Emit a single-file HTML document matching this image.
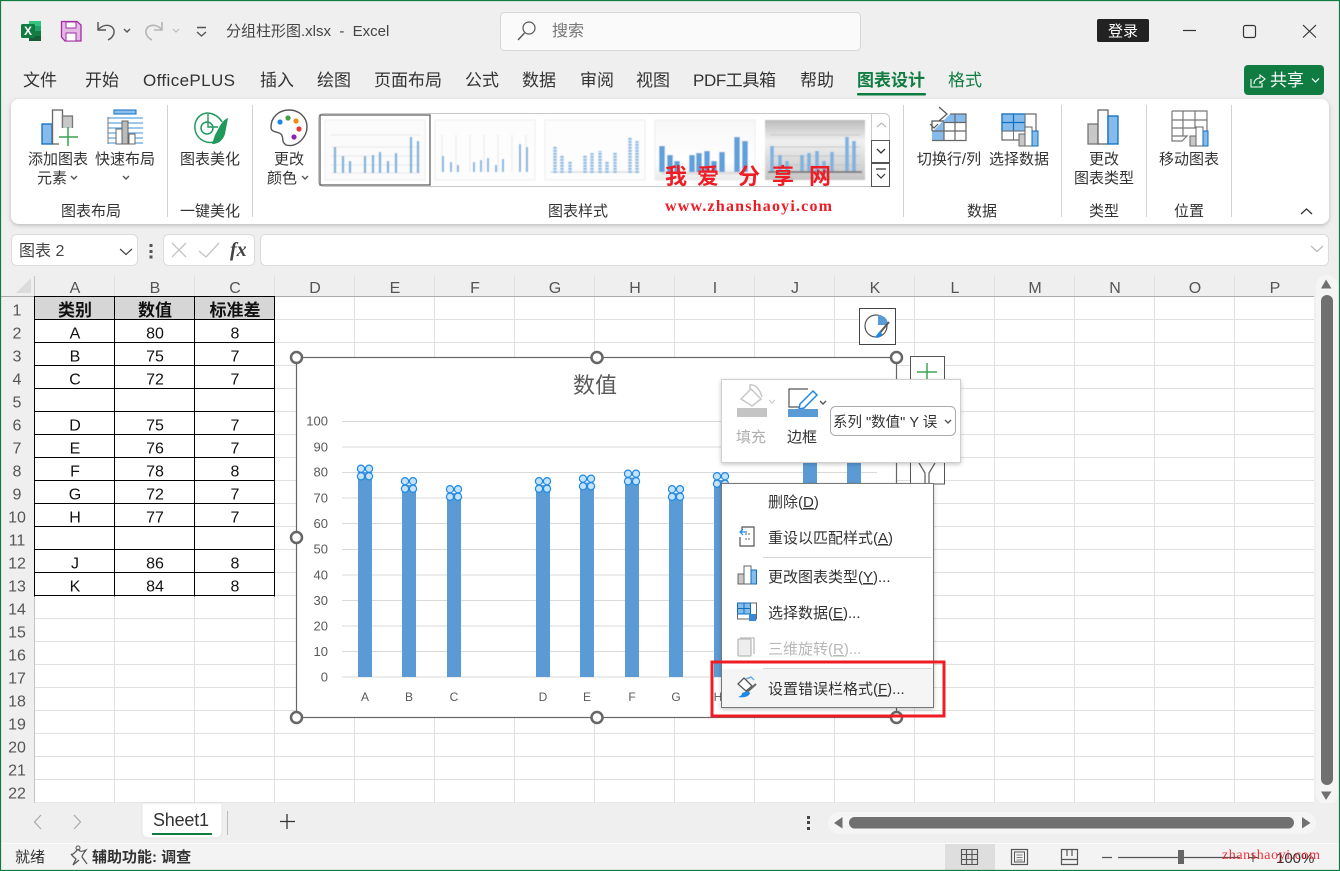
<!DOCTYPE html>
<html lang="zh"><head><meta charset="utf-8"><title>分组柱形图.xlsx - Excel</title>
<style>
html,body{margin:0;padding:0;width:1340px;height:871px;overflow:hidden;background:#efefef}
svg{display:block}
text{font-family:"Liberation Sans","Noto Sans CJK SC",sans-serif;fill:#333;font-size:15px}
.m{text-anchor:middle}.e{text-anchor:end}
.tab{font-size:17px;fill:#333}
.h{font-size:16px;fill:#555;text-anchor:middle}
.c{font-size:16px;fill:#111;text-anchor:middle}
.ax{font-size:13px;fill:#595959;text-anchor:end}
.xl{font-size:12px;fill:#595959;text-anchor:middle}
.mn{font-size:15px;fill:#333}
.i{fill:none;stroke:#555;stroke-width:1.4}
.gl{font-size:15px}
</style></head><body>
<svg width="1340" height="871" viewBox="0 0 1340 871" xmlns="http://www.w3.org/2000/svg">
<defs>
<filter id="sh" x="-5%" y="-10%" width="110%" height="125%"><feDropShadow dx="0" dy="1.5" stdDeviation="2" flood-color="#000" flood-opacity=".22"/></filter>
<filter id="bl" x="-5%" y="-5%" width="110%" height="110%"><feGaussianBlur stdDeviation=".5"/></filter>
<pattern id="grid" x="35" y="297" width="80" height="23" patternUnits="userSpaceOnUse"><rect width="80" height="23" fill="#fff"/><path d="M79.5 0V23M0 22.5H80" stroke="#e0e0e0" stroke-width="1"/></pattern>
<linearGradient id="g4" x1="0" y1="0" x2="0" y2="1"><stop offset="0" stop-color="#f7f7f7"/><stop offset=".7" stop-color="#ffffff"/><stop offset="1" stop-color="#e9e9e9"/></linearGradient>
<linearGradient id="g5" x1="0" y1="0" x2="0" y2="1"><stop offset="0" stop-color="#bbb"/><stop offset=".35" stop-color="#f0f0f0"/><stop offset="1" stop-color="#c4c4c4"/></linearGradient>
<clipPath id="ddc"><rect x="832" y="408" width="108" height="26"/></clipPath>
<g id="hd"><circle cx="-4" cy="-3.8" r="3.6"/><circle cx="4" cy="-3.8" r="3.6"/><circle cx="-4" cy="3.8" r="3.6"/><circle cx="4" cy="3.8" r="3.6"/></g>
</defs>

<rect width="1340" height="871" fill="#efefef"/>

<!-- title bar -->
<rect x="29" y="21" width="12" height="20" rx="1.5" fill="#21a366"/><rect x="29" y="21" width="12" height="5" fill="#33c481"/><rect x="29" y="31" width="12" height="5" fill="#107c41"/><rect x="29" y="36" width="12" height="5" fill="#185c37"/>
<rect x="21" y="24" width="14" height="14" rx="1.5" fill="#107c41"/><text x="28" y="35" class="m" style="font-size:12px;font-weight:bold;fill:#fff">X</text>
<path d="M61.500 21.500H77L81 25V41H65L61.500 37Z" fill="#e3b8e3" stroke="#a32ba3" stroke-width="1.3"/><rect x="66" y="22" width="10" height="6" fill="#fff" stroke="#a32ba3"/><rect x="66" y="33" width="10" height="8" fill="#fff" stroke="#a32ba3"/>
<path d="M98 22V30H106M98 30C102 25 108 24 112 27C116 31 114 37 108 40" class="i" stroke-width="1.6"/><path d="M124 29l3 3 3-3" class="i" stroke-width="1.2"/>
<path d="M162 22V30H154M162 30C158 25 152 24 148 27C144 31 146 37 152 40" fill="none" stroke="#b5b5b5" stroke-width="1.6"/><path d="M173 29l3 3 3-3" fill="none" stroke="#bbb" stroke-width="1.2"/>
<path d="M197 27.500H206M197 32l4.500 4 4.500-4" class="i" stroke-width="1.2"/>
<text x="226" y="36" style="font-size:15px;fill:#444">分组柱形图.xlsx&#160;&#160;-&#160;&#160;Excel</text>
<rect x="500.500" y="12.500" width="360" height="38" rx="4" fill="#fafafa" stroke="#d6d6d6"/>
<circle cx="529" cy="28" r="6" class="i" stroke="#666" style="stroke-width:1.2"/><path d="M524.500 33L518 40" class="i" stroke-width="1.200"/>
<text x="552" y="36" style="font-size:16px;fill:#777">搜索</text>
<rect x="1097" y="19" width="52" height="23" rx="2" fill="#222"/><text x="1123" y="36" class="m" style="fill:#fff;font-size:15px">登录</text>
<path d="M1183 30.500H1196" stroke="#333" stroke-width="1.200"/><rect x="1243.500" y="25.500" width="12" height="12" rx="2" fill="none" stroke="#333" stroke-width="1.200"/><path d="M1303 25L1316 37.500M1316 25L1303 37.500" stroke="#333" stroke-width="1.200"/>

<!-- tabs -->
<text class="tab" x="23" y="86">文件</text><text class="tab" x="85" y="86">开始</text><text class="tab" x="143" y="86" textLength="92">OfficePLUS</text><text class="tab" x="260" y="86">插入</text><text class="tab" x="317" y="86">绘图</text><text class="tab" x="374" y="86">页面布局</text><text class="tab" x="465" y="86">公式</text><text class="tab" x="522" y="86">数据</text><text class="tab" x="580" y="86">审阅</text><text class="tab" x="636" y="86">视图</text><text class="tab" x="693" y="86" textLength="83">PDF工具箱</text><text class="tab" x="800" y="86">帮助</text>
<text class="tab" x="857" y="86" style="font-weight:bold;fill:#107c41">图表设计</text><rect x="857" y="93" width="69" height="2.500" rx="1" fill="#107c41"/>
<text class="tab" x="948" y="86" style="fill:#107c41">格式</text>
<rect x="1244" y="65" width="80" height="30" rx="4" fill="#107c41"/>
<path d="M1251 79V87H1262V83M1254 84C1254 80 1257 78 1260 78V75L1265 79L1260 83V81" fill="none" stroke="#fff" stroke-width="1.100"/>
<text x="1270" y="86" style="font-size:17px;fill:#fff">共享</text><path d="M1312 78.500l3.500 3.500 3.500-3.500" fill="none" stroke="#fff" stroke-width="1.200"/>

<!-- ribbon -->
<rect x="11" y="99" width="1318" height="125" rx="8" fill="#fff" filter="url(#sh)"/>
<path d="M167.500 105V217M252.500 105V217M903.500 105V217M1061.500 105V217M1146.500 105V217M1231.500 105V217" stroke="#d2d2d2"/>

<!-- add chart element -->
<rect x="42" y="124" width="10" height="20" fill="#85bcec" stroke="#106ebe" stroke-width="1.300"/><rect x="52.500" y="110" width="10" height="34" fill="#fafafa" stroke="#666" stroke-width="1.300"/><rect x="62.500" y="116" width="10" height="28" fill="#c8c8c8" stroke="#777" stroke-width="1.300"/><rect x="59" y="128" width="20" height="18" fill="#fff"/><path d="M68 127V146M59 137H78" stroke="#37a24f" stroke-width="1.500"/>
<!-- quick layout -->
<rect x="114" y="110" width="22" height="4" fill="#8cc0ee" stroke="#106ebe"/><path d="M108 118H143M108 123H143M108 128H143M108 133H143M108 138H143M108 143H143" stroke="#5ea6e2" stroke-width="1.300"/><path d="M108 117V144" stroke="#777"/><rect x="116" y="129" width="6" height="15" fill="#fff" stroke="#666"/><rect x="122" y="121" width="6" height="23" fill="#bbb" stroke="#666"/><rect x="129" y="134" width="6" height="10" fill="#fff" stroke="#666"/>
<!-- beautify -->
<path d="M222 122C218 115 209 111 203 114C196 117 193 125 196 133C199 140 207 144 214 142" fill="none" stroke="#1f9a5a" stroke-width="1.500"/><circle cx="207" cy="128" r="6" fill="#fff" stroke="#1f9a5a" stroke-width="1.500"/><path d="M208 114V127H218" fill="none" stroke="#1f9a5a" stroke-width="1.400"/><path d="M228 118C222 120 219 128 215 135L212 144C219 144 223 140 225 134Z" fill="#1f9a5a"/>
<!-- palette -->
<path d="M289 110C278 110 271 118 271 127C271 133 277 131 281 134C284 137 281 142 286 145C297 148 307 137 307 127C307 117 299 110 289 110Z" fill="#fff" stroke="#555" stroke-width="1.400"/><circle cx="280" cy="122" r="2.600" fill="#1e88e5"/><circle cx="288" cy="118" r="2.600" fill="#43a047"/><circle cx="296" cy="121" r="2.600" fill="#ef8c0e"/><circle cx="299" cy="129" r="2.600" fill="#e53935"/><circle cx="294" cy="137" r="2.600" fill="#8e24aa"/>

<text class="m" x="58" y="164">添加图表</text><text class="m" x="52" y="183">元素</text><path d="M71 176l3 3 3-3" class="i" stroke-width="1.100"/>
<text class="m" x="125" y="164">快速布局</text><path d="M123 176l3 3 3-3" class="i" stroke-width="1.100"/>
<text class="m" x="210" y="164">图表美化</text>
<text class="m" x="289" y="164">更改</text><text class="m" x="282" y="183">颜色</text><path d="M302 176l3 3 3-3" class="i" stroke-width="1.100"/>
<text class="m gl" x="91" y="216">图表布局</text><text class="m gl" x="210" y="216">一键美化</text><text class="m gl" x="578" y="216">图表样式</text>

<!-- gallery -->
<rect x="318.500" y="113.500" width="571" height="73" rx="5" fill="#fff" stroke="#c8c8c8"/>
<g filter="url(#bl)">
<rect x="325" y="120" width="100" height="60" fill="#fbfbfb" stroke="#eee"/>
<path d="M331 135H420M331 147H420M331 156H420M331 165H420M331 173H420" stroke="#e8e8e8"/>
<path d="M335 173V147M343 173V156M350 173V161M365 173V156M373 173V155M380 173V152M388 173V161M396 173V153M411 173V137M418 173V141" stroke="#78aedd" stroke-width="2.200"/>
<rect x="435" y="120" width="100" height="60" fill="#fdfdfd" stroke="#efefef"/>
<path d="M442 135V172M456 135V172M470 135V172M484 135V172M498 135V172M512 135V172M526 135V172" stroke="#eee" stroke-width="1.500"/>
<path d="M443 172V156M451 172V162M458 172V165M474 172V162M481 172V160M488 172V158M496 172V165M503 172V159M520 172V144M527 172V147" stroke="#78aedd" stroke-width="1.800"/>
<rect x="545" y="120" width="100" height="60" fill="#fdfdfd" stroke="#efefef"/><path d="M550 172H640" stroke="#e4e4e4" stroke-width="2"/>
<path d="M555 173V146M562 173V155M570 173V161M585 173V155M592 173V153M600 173V151M607 173V161M615 173V152M630 173V137M637 173V141" stroke="#8fbce4" stroke-width="3.500" stroke-dasharray="2.200 .8"/>
<rect x="655" y="120" width="100" height="60" fill="url(#g4)" stroke="#eee"/>
<path d="M661 173H745" stroke="#e0e0e0" stroke-width="3"/>
<path d="M662 172V146M670 172V155M677 172V161M692 172V155M699 172V153M707 172V151M714 172V161M722 172V152M737 172V137M745 172V141" stroke="#5f9fda" stroke-width="5.500"/>
<rect x="765" y="120" width="100" height="60" fill="url(#g5)"/>
<path d="M770 135H860M770 147H860M770 156H860M770 165H860" stroke="#c8c8c8"/>
<path d="M772 172V146M780 172V155M787 172V161M802 172V155M809 172V153M817 172V151M824 172V161M832 172V152M847 172V137M854 172V141" stroke="#7fb2e0" stroke-width="3.600"/>
<path d="M768 172H862" stroke="#777" stroke-width="1.800"/>
</g>
<rect x="320" y="115" width="110" height="70" fill="none" stroke="#555" stroke-width="1.200"/>
<path d="M871.500 114V186" stroke="#ccc"/>
<path d="M877 127l4.500-4 4.500 4" fill="none" stroke="#bbb" stroke-width="1.200"/>
<rect x="871.500" y="140.500" width="18" height="22" fill="#fff" stroke="#555"/><path d="M877 149l4 4 4-4" fill="none" stroke="#333" stroke-width="1.300"/>
<rect x="871.500" y="163.500" width="18" height="23" fill="#fff" stroke="#555"/><path d="M876 169H886M877 174l4 4 4-4" fill="none" stroke="#333" stroke-width="1.200"/>

<!-- data group icons -->
<path d="M932 141V132L950 114H966V140H932Z" fill="#85bcec"/>
<rect x="944" y="123" width="22" height="8" fill="#fff"/><rect x="944" y="131" width="22" height="9" fill="#fff"/>
<path d="M932 140.500H966V114H950M966 122.500H944M966 131H932M955 114V140M944 122V140" fill="none" stroke="#666" stroke-width="1.200"/>
<path d="M932 131V121H944M939 107L947 114L939 121M930 124L934 128L938 124" fill="none" stroke="#555" stroke-width="1.200"/>
<rect x="1002" y="114" width="34" height="26" fill="#fff" stroke="#666" stroke-width="1.200"/><rect x="1002" y="114" width="23" height="17" fill="#85bcec" stroke="#106ebe" stroke-width="1.200"/><path d="M1013.500 114V131M1002 122.500H1025" stroke="#106ebe" stroke-width="1.200"/><path d="M1002 131H1036M1013.500 131V140M1025 114V140" stroke="#777"/>
<rect x="1019" y="134" width="6" height="12" fill="#c8c8c8" stroke="#666"/><rect x="1025" y="127" width="7" height="19" fill="#fff" stroke="#666"/><rect x="1032" y="131" width="6" height="15" fill="#85bcec" stroke="#106ebe"/>
<rect x="1088" y="124" width="10" height="20" fill="#c8c8c8" stroke="#777" stroke-width="1.300"/><rect x="1098" y="110" width="10" height="34" fill="#fafafa" stroke="#666" stroke-width="1.300"/><rect x="1108" y="116" width="10" height="28" fill="#85bcec" stroke="#106ebe" stroke-width="1.300"/>
<path d="M1172 111H1207V135M1172 111V141H1182L1187 136H1172M1172 120H1207M1172 128H1197M1183 111V136M1195 111V128" fill="#fff" stroke="#777" stroke-width="1.200"/>
<rect x="1190" y="136" width="6" height="10" fill="#c8c8c8" stroke="#666"/><rect x="1196" y="127" width="7" height="19" fill="#fff" stroke="#666"/><rect x="1203" y="131" width="5" height="15" fill="#85bcec" stroke="#106ebe"/>

<text class="m" x="949" y="164">切换行/列</text><text class="m" x="1019" y="164">选择数据</text><text class="m gl" x="982" y="216">数据</text>
<text class="m" x="1104" y="164">更改</text><text class="m" x="1104" y="183">图表类型</text><text class="m gl" x="1104" y="216">类型</text>
<text class="m" x="1189" y="164">移动图表</text><text class="m gl" x="1189" y="216">位置</text>
<path d="M1301 214l5.500-5 5.500 5" fill="none" stroke="#333" stroke-width="1.300"/>

<!-- formula bar -->
<rect x="11.500" y="234.500" width="126" height="31" rx="5" fill="#fff" stroke="#dcdcdc"/><text x="19" y="256" style="font-size:16px;fill:#444">图表 2</text><path d="M120 249l6 5.500 6-5.500" fill="none" stroke="#444" stroke-width="1.200"/>
<rect x="149.500" y="244" width="3" height="3" fill="#555"/><rect x="149.500" y="250" width="3" height="3" fill="#555"/><rect x="149.500" y="255.500" width="3" height="3" fill="#555"/>
<rect x="163.500" y="234.500" width="91" height="31" rx="5" fill="#fff" stroke="#dcdcdc"/>
<path d="M172 243L186 257M186 243L172 257" stroke="#c4c4c4" stroke-width="1.300"/><path d="M199 251L206 257L219 243" fill="none" stroke="#c4c4c4" stroke-width="1.300"/>
<text x="230" y="256" style="font-family:'Liberation Serif',serif;font-style:italic;font-weight:bold;font-size:20px;fill:#444">fx</text>
<rect x="260.500" y="234.500" width="1068" height="31" rx="5" fill="#fff" stroke="#dcdcdc"/><path d="M1311 246l6 5.500 6-5.500" fill="none" stroke="#bbb" stroke-width="1.200"/>

<!-- sheet -->
<rect x="35" y="297" width="1279" height="505.500" fill="url(#grid)"/>
<path d="M31 278V293H16Z" fill="#dcdcdc"/>
<path d="M114.500 276V296M194.500 276V296M274.500 276V296M354.500 276V296M434.500 276V296M514.500 276V296M594.500 276V296M674.500 276V296M754.500 276V296M834.500 276V296M914.500 276V296M994.500 276V296M1074.500 276V296M1154.500 276V296M1234.500 276V296" stroke="#e0e0e0"/>
<rect x="1" y="296" width="1313" height="1" fill="#aaa"/><rect x="34" y="276" width="1" height="527" fill="#c4c4c4"/>
<g>
<text class="h" x="75" y="293">A</text><text class="h" x="155" y="293">B</text><text class="h" x="235" y="293">C</text><text class="h" x="315" y="293">D</text><text class="h" x="395" y="293">E</text><text class="h" x="475" y="293">F</text><text class="h" x="555" y="293">G</text><text class="h" x="635" y="293">H</text><text class="h" x="715" y="293">I</text><text class="h" x="795" y="293">J</text><text class="h" x="875" y="293">K</text><text class="h" x="955" y="293">L</text><text class="h" x="1035" y="293">M</text><text class="h" x="1115" y="293">N</text><text class="h" x="1195" y="293">O</text><text class="h" x="1275" y="293">P</text>
<text class="h" x="17" y="315.500">1</text><text class="h" x="17" y="338.500">2</text><text class="h" x="17" y="361.500">3</text><text class="h" x="17" y="384.500">4</text><text class="h" x="17" y="407.500">5</text><text class="h" x="17" y="430.500">6</text><text class="h" x="17" y="453.500">7</text><text class="h" x="17" y="476.500">8</text><text class="h" x="17" y="499.500">9</text><text class="h" x="17" y="522.500">10</text><text class="h" x="17" y="545.500">11</text><text class="h" x="17" y="568.500">12</text><text class="h" x="17" y="591.500">13</text><text class="h" x="17" y="614.500">14</text><text class="h" x="17" y="637.500">15</text><text class="h" x="17" y="660.500">16</text><text class="h" x="17" y="683.500">17</text><text class="h" x="17" y="706.500">18</text><text class="h" x="17" y="729.500">19</text><text class="h" x="17" y="752.500">20</text><text class="h" x="17" y="775.500">21</text><text class="h" x="17" y="798.500">22</text>
</g>
<!-- table -->
<rect x="35" y="297" width="239" height="22" fill="#d6d6d6"/><rect x="35" y="320" width="239" height="276" fill="#fff"/>
<path d="M34.500 296V596.500M114.500 296V596.500M194.500 296V596.500M274.500 296V596.500M34 296.500H275M34 319.500H275M34 342.500H275M34 365.500H275M34 388.500H275M34 411.500H275M34 434.500H275M34 457.500H275M34 480.500H275M34 503.500H275M34 526.500H275M34 549.500H275M34 572.500H275M34 595.500H275" stroke="#000" fill="none"/>
<text class="c" x="75" y="316" style="font-weight:bold;font-size:17px">类别</text><text class="c" x="155" y="316" style="font-weight:bold;font-size:17px">数值</text><text class="c" x="235" y="316" style="font-weight:bold;font-size:17px">标准差</text>
<text class="c" x="75" y="338.500">A</text><text class="c" x="155" y="338.500">80</text><text class="c" x="235" y="338.500">8</text>
<text class="c" x="75" y="361.500">B</text><text class="c" x="155" y="361.500">75</text><text class="c" x="235" y="361.500">7</text>
<text class="c" x="75" y="384.500">C</text><text class="c" x="155" y="384.500">72</text><text class="c" x="235" y="384.500">7</text>
<text class="c" x="75" y="430.500">D</text><text class="c" x="155" y="430.500">75</text><text class="c" x="235" y="430.500">7</text>
<text class="c" x="75" y="453.500">E</text><text class="c" x="155" y="453.500">76</text><text class="c" x="235" y="453.500">7</text>
<text class="c" x="75" y="476.500">F</text><text class="c" x="155" y="476.500">78</text><text class="c" x="235" y="476.500">8</text>
<text class="c" x="75" y="499.500">G</text><text class="c" x="155" y="499.500">72</text><text class="c" x="235" y="499.500">7</text>
<text class="c" x="75" y="522.500">H</text><text class="c" x="155" y="522.500">77</text><text class="c" x="235" y="522.500">7</text>
<text class="c" x="75" y="568.500">J</text><text class="c" x="155" y="568.500">86</text><text class="c" x="235" y="568.500">8</text>
<text class="c" x="75" y="591.500">K</text><text class="c" x="155" y="591.500">84</text><text class="c" x="235" y="591.500">8</text>

<!-- chart -->
<rect x="859.500" y="308.500" width="36" height="36" fill="#fff" stroke="#444"/>
<circle cx="876" cy="326" r="11" fill="none" stroke="#555" stroke-width="1.200"/><path d="M878 315V325H888C888 319 884 315 878 315Z" fill="#5b9bd5"/><path d="M889 322L878 335" stroke="#555" stroke-width="2"/><path d="M880 331L875 337C878 339 881 337 882 334Z" fill="#1e88e5"/>
<rect x="910.500" y="356.500" width="34" height="127.500" fill="#fff" stroke="#555"/>
<path d="M927 363V381M917 372H937" stroke="#3aa655" stroke-width="1.500"/>
<path d="M919 463L925 473V483M935 463L929 473V483" fill="none" stroke="#666" stroke-width="1.300"/>
<rect x="296.500" y="357.500" width="600" height="360" fill="#fff" stroke="#666" stroke-width="1.200"/>
<text class="m" x="595" y="393" style="font-size:22px;fill:#595959">数值</text>
<path d="M342 421.500H877M342 447H877M342 472.500H877M342 498H877M342 523.500H877M342 549.500H877M342 575H877M342 600.500H877M342 626H877M342 651.500H877M342 677H877" stroke="#d9d9d9" stroke-width="1.100"/>
<text class="ax" x="328" y="425.500">100</text><text class="ax" x="328" y="451.500">90</text><text class="ax" x="328" y="476.500">80</text><text class="ax" x="328" y="502.500">70</text><text class="ax" x="328" y="528">60</text><text class="ax" x="328" y="553.500">50</text><text class="ax" x="328" y="579.500">40</text><text class="ax" x="328" y="605">30</text><text class="ax" x="328" y="630.500">20</text><text class="ax" x="328" y="656">10</text><text class="ax" x="328" y="681.500">0</text>
<g fill="#5b9bd5"><rect x="358" y="472" width="14" height="205"/><rect x="402" y="485" width="14" height="192"/><rect x="447" y="493" width="14" height="184"/><rect x="536" y="485" width="14" height="192"/><rect x="580" y="482.500" width="14" height="194.500"/><rect x="625" y="477.500" width="14" height="199.500"/><rect x="669" y="493" width="14" height="184"/><rect x="714" y="480" width="14" height="197"/><rect x="803" y="457" width="14" height="220"/><rect x="847" y="462" width="14" height="215"/></g>
<g fill="#c4e2f8" stroke="#1e88e5" stroke-width="1.200"><use href="#hd" x="365" y="472.500"/><use href="#hd" x="409" y="485"/><use href="#hd" x="454" y="493"/><use href="#hd" x="543" y="485"/><use href="#hd" x="587" y="482.500"/><use href="#hd" x="632" y="477.500"/><use href="#hd" x="676" y="493"/><use href="#hd" x="721" y="480"/></g>
<text class="xl" x="365" y="701">A</text><text class="xl" x="409" y="701">B</text><text class="xl" x="454" y="701">C</text><text class="xl" x="543" y="701">D</text><text class="xl" x="587" y="701">E</text><text class="xl" x="632" y="701">F</text><text class="xl" x="676" y="701">G</text><text class="xl" x="718" y="701">H</text>
<g fill="#fff" stroke="#666" stroke-width="2.500"><circle cx="296.500" cy="357.500" r="5.500"/><circle cx="597" cy="357.500" r="5.500"/><circle cx="896.500" cy="357.500" r="5.500"/><circle cx="296.500" cy="537.500" r="5.500"/><circle cx="296.500" cy="717.500" r="5.500"/><circle cx="597" cy="717.500" r="5.500"/><circle cx="896.500" cy="717.500" r="5.500"/></g>

<!-- float toolbar -->
<rect x="721.500" y="379.500" width="239" height="83" fill="#fff" stroke="#d0d0d0" filter="url(#sh)"/>
<path d="M741 399L751 389L761 399L752 406Z" fill="#fff" stroke="#c6c6c6" stroke-width="1.500"/><path d="M750 389V385C756 384 760 390 762 397" fill="none" stroke="#c6c6c6" stroke-width="1.500"/>
<rect x="737" y="408" width="30" height="9" fill="#c4c4c4"/><path d="M769 400l3 3 3-3" fill="none" stroke="#c6c6c6" stroke-width="1.100"/>
<text class="m" x="751" y="442" style="font-size:15px;fill:#b0b0b0">填充</text>
<path d="M808 389H789V407H801" fill="none" stroke="#555" stroke-width="1.200"/><path d="M800 404L813 391L817 395L804 408L799 409Z" fill="#fff" stroke="#1e88e5" stroke-width="1.500"/>
<rect x="788" y="409" width="30" height="8" fill="#5b9bd5"/><path d="M820 401l3 3 3-3" class="i" stroke-width="1.200"/>
<text class="m" x="802" y="442" style="font-size:15px">边框</text>
<rect x="830.500" y="406.500" width="125" height="29" rx="5" fill="#fff" stroke="#aaa"/>
<text x="833" y="427" clip-path="url(#ddc)" style="font-size:14.500px">系列 "数值" Y 误</text>
<path d="M945 420l3 3 3-3" class="i" stroke-width="1.200"/>

<!-- context menu -->
<rect x="721.500" y="483.500" width="212" height="224" fill="#fff" stroke="#777" filter="url(#sh)"/>
<rect x="722" y="669" width="211" height="38" fill="#f5f5f5"/>
<path d="M763 557.500H932M763 668.500H932" stroke="#d8d8d8"/>
<text class="mn" x="768" y="507">删除(<tspan text-decoration="underline">D</tspan>)</text>
<text class="mn" x="768" y="543">重设以匹配样式(<tspan text-decoration="underline">A</tspan>)</text>
<text class="mn" x="768" y="582">更改图表类型(<tspan text-decoration="underline">Y</tspan>)...</text>
<text class="mn" x="768" y="618">选择数据(<tspan text-decoration="underline">E</tspan>)...</text>
<text class="mn" x="768" y="654" style="fill:#b8b8b8">三维旋转(<tspan text-decoration="underline">R</tspan>)...</text>
<text class="mn" x="768" y="694">设置错误栏格式(<tspan text-decoration="underline">F</tspan>)...</text>
<path d="M742 531V527H754V546H740V537" fill="none" stroke="#555" stroke-width="1.200"/><path d="M747 532H741M743 529L740 532L743 535" fill="none" stroke="#1e88e5" stroke-width="1.200"/><path d="M746 533V535M749 533V535M746 538V540M749 538V540" stroke="#666"/>
<rect x="738" y="574" width="6" height="10" fill="#c8c8c8" stroke="#666"/><rect x="744" y="566" width="7" height="18" fill="#fff" stroke="#666"/><rect x="751" y="570" width="5.500" height="14" fill="#85bcec" stroke="#106ebe"/>
<rect x="737.500" y="603" width="19" height="16" fill="#fff" stroke="#666"/><rect x="737.500" y="603" width="13" height="11" fill="#85bcec" stroke="#106ebe"/><path d="M744 603V614M738 608.500H750" stroke="#106ebe"/><rect x="749" y="614" width="7" height="7" fill="#3b89d6"/>
<rect x="738" y="639" width="13" height="17" rx="1" fill="#eee" stroke="#bbb" stroke-width="1.300"/><path d="M740 638H754V654" fill="none" stroke="#bbb" stroke-width="1.300"/>
<path d="M738 684L744 678L752 686L746 691Z" fill="#fff" stroke="#555" stroke-width="1.300"/><path d="M756 684L746 693" stroke="#666" stroke-width="2"/><path d="M748 691L742 693C742 696 740 696 738 697C743 698 749 697 750 693Z" fill="#1e88e5"/><path d="M746 679l5-2 3 3" fill="none" stroke="#6aaee8" stroke-width="1.500"/>

<rect x="712" y="662" width="232" height="54" fill="none" stroke="#ee1c25" stroke-width="3"/>

<!-- scrollbars -->
<rect x="1316" y="275" width="22" height="530" rx="11" fill="#f5f5f5"/>
<rect x="1321" y="295" width="12" height="490" rx="6" fill="#707070"/>
<path d="M1321 288.500L1326 279.500L1331.500 288.500Z" fill="#707070"/><path d="M1321 791.500L1326 800L1331.500 791.500Z" fill="#707070"/>

<!-- sheet bar -->
<rect x="0" y="803" width="1340" height="40" fill="#efefef"/>
<path d="M41 815L34.500 822L41 829M74 815L80.500 822L74 829" fill="none" stroke="#aaa" stroke-width="1.200"/>
<path d="M142 803H222V831Q222 838 215 838H149Q142 838 142 831Z" fill="#fff" stroke="#e4e4e4"/>
<text class="m" x="181" y="826" style="font-size:18px;fill:#333" textLength="56">Sheet1</text><rect x="152" y="833" width="60" height="2" fill="#107c41"/>
<path d="M227.500 811V835" stroke="#bbb"/><path d="M287 814V829M280 821.500H295" stroke="#333" stroke-width="1.300"/>
<rect x="807" y="816" width="3" height="3" fill="#444"/><rect x="807" y="821" width="3" height="3" fill="#444"/><rect x="807" y="827" width="3" height="3" fill="#444"/>
<rect x="828" y="812" width="488" height="22" rx="11" fill="#f5f5f5"/>
<rect x="849" y="817" width="445" height="11.500" rx="5.750" fill="#707070"/>
<path d="M842.500 817V828.500L834 823Z M1302 817V828.500L1310.500 823Z" fill="#707070"/>

<!-- status bar -->
<rect x="0" y="843" width="1340" height="28" fill="#f3f3f3"/><rect x="0" y="843" width="1340" height="1" fill="#fbfbfb"/>
<text x="15" y="862" style="font-size:15px;fill:#333">就绪</text>
<path d="M78 849C80 853 84 851 86 850C84 853 82 855 82 857L87 864M78 849C74 854 72 855 71 854C73 857 75 858 76 859L73 865L79 860" fill="none" stroke="#555" stroke-width="1.200"/><circle cx="78" cy="848" r="2" fill="none" stroke="#555"/>
<text x="92" y="862" style="font-size:15px;font-weight:bold;fill:#333">辅助功能: 调查</text>
<rect x="945" y="844" width="50" height="26" fill="#dedede"/>
<path d="M961.500 849.500H977.500V864.500H961.500ZM961.500 854.500H977.500M961.500 859.500H977.500M966.500 849.500V864.500M972 849.500V864.500" fill="none" stroke="#555" stroke-width="1.100"/>
<rect x="1011.500" y="849.500" width="16" height="15" fill="none" stroke="#555" stroke-width="1.200"/><rect x="1014.500" y="852" width="10" height="10" fill="none" stroke="#555"/><path d="M1016.500 855H1022.500M1016.500 857.500H1022.500M1016.500 860H1022.500" stroke="#555" stroke-width=".8"/>
<path d="M1061.500 849.500H1077.500V864.500H1061.500ZM1061.500 859.500H1077.500V849.500M1067 849.500V856M1072 849.500V856" fill="none" stroke="#555" stroke-width="1.200"/>
<path d="M1102 857.500H1112M1118 857.500H1240" stroke="#555" stroke-width="1.200"/><rect x="1178" y="850" width="6" height="14" fill="#666"/>
<path d="M1253 853V862M1248.500 857.500H1258" stroke="#555" stroke-width="1.100"/>
<text x="1276" y="863" style="font-size:15px;fill:#333">100%</text>

<!-- watermarks -->
<text x="665" y="184" style="font-size:22px;font-weight:bold;fill:#ee1c25;font-family:'Noto Sans CJK SC',sans-serif">我</text>
<text x="697" y="184" style="font-size:22px;font-weight:bold;fill:#ee1c25;font-family:'Noto Sans CJK SC',sans-serif">爱</text>
<text x="738" y="184" style="font-size:22px;font-weight:bold;fill:#ee1c25;font-family:'Noto Sans CJK SC',sans-serif">分</text>
<text x="772" y="184" style="font-size:22px;font-weight:bold;fill:#ee1c25;font-family:'Noto Sans CJK SC',sans-serif">享</text>
<text x="809" y="184" style="font-size:22px;font-weight:bold;fill:#ee1c25;font-family:'Noto Sans CJK SC',sans-serif">网</text>
<text x="665" y="211" textLength="167" style="font-size:16px;font-weight:bold;fill:#ee1c25;font-family:'Liberation Serif',serif">www.zhanshaoyi.com</text>
<text x="1222" y="859" textLength="98" style="font-size:14px;fill:#ee1c25;font-family:'Liberation Serif',serif;opacity:.9">zhanshaoyi.com</text>

<!-- window border -->
<path d="M.5 .5H1339.500V870.500H.5Z" fill="none" stroke="#107c41" stroke-width="1.200"/>
</svg>
</body></html>
